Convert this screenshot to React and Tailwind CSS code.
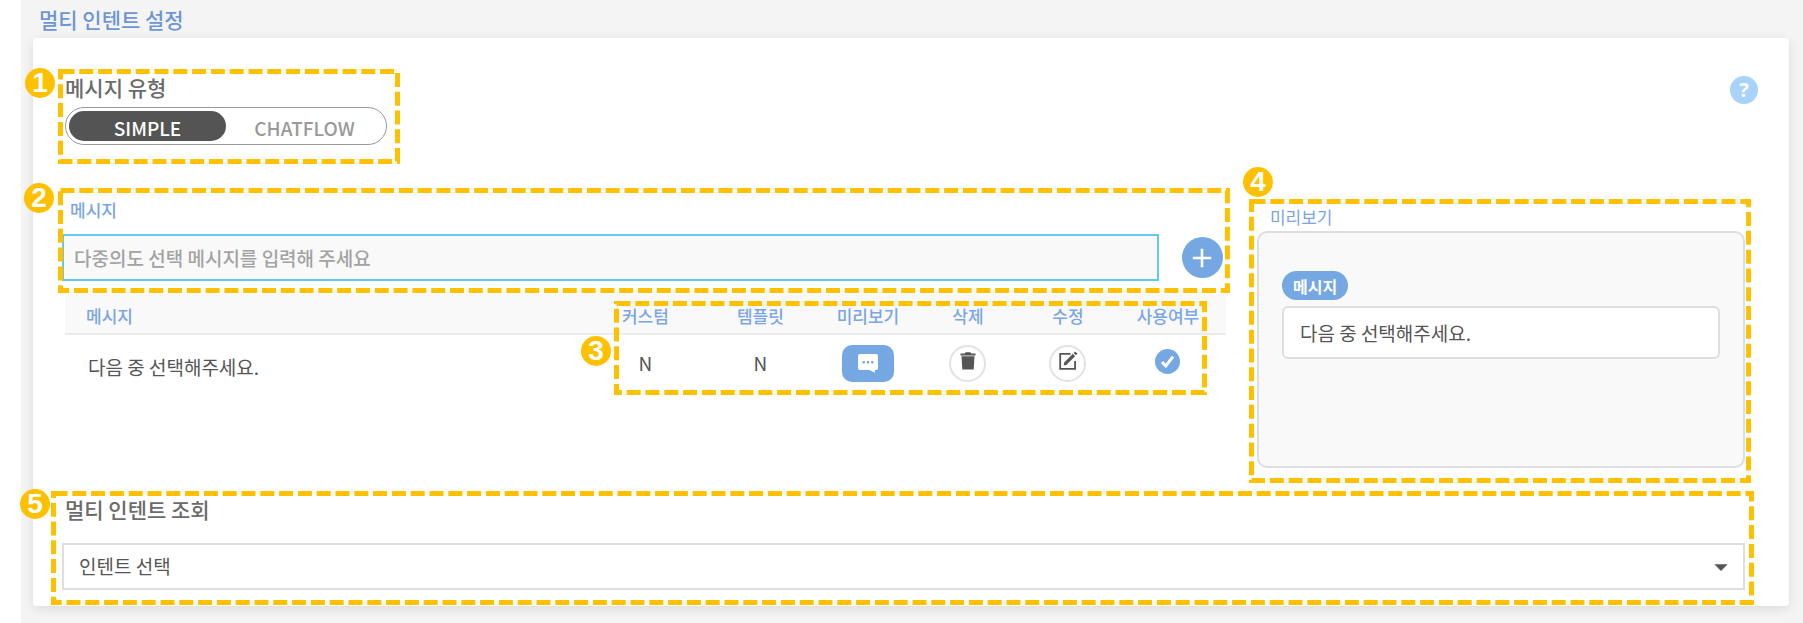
import React from "react";
import { MdArrowDropDown } from "react-icons/md";

const BADGE =
  "absolute flex h-[30px] w-[30px] items-center justify-center rounded-full bg-[#ffc000] font-['Liberation_Sans',sans-serif] text-[28px] leading-none font-bold text-white";

function Callout({ number, box, badge }) {
  return (
    <div className={`pointer-events-none absolute z-10 ${box}`}>
      <svg className="block h-full w-full" aria-hidden="true">
        <rect
          x="2.5"
          y="2.5"
          className="h-[calc(100%-5px)] w-[calc(100%-5px)]"
          fill="none"
          stroke="#ffc000"
          strokeWidth="5"
          strokeDasharray="14 4.8"
        />
      </svg>
      <span className={`${BADGE} ${badge}`}>{number}</span>
    </div>
  );
}

function TypeOption({ value, defaultChecked }) {
  return (
    <label className="flex flex-1 cursor-pointer items-center justify-center rounded-full pt-[2px] text-[19px] leading-none font-medium text-[#999] has-checked:bg-[#545454] has-checked:text-white">
      <input
        type="radio"
        name="messageType"
        value={value}
        defaultChecked={defaultChecked}
        className="sr-only"
      />
      {value}
    </label>
  );
}

function TypeSection() {
  return (
    <div className="flex items-start justify-between">
      <div className="relative ml-[3px] w-[322px]">
        <fieldset>
          <legend className="text-[21px] leading-7 font-medium text-[#6b6b6b]">메시지 유형</legend>
          <div className="mt-[6px] flex h-[38px] rounded-full border border-[#999] p-[3px]">
            <TypeOption value="SIMPLE" defaultChecked />
            <TypeOption value="CHATFLOW" />
          </div>
        </fieldset>
        <Callout
          number={1}
          box="-top-[4px] -right-[13px] -bottom-[19px] -left-[7px]"
          badge="-left-[33px] -top-px"
        />
      </div>
      <button
        type="button"
        aria-label="도움말"
        className="mt-[3px] -mr-[13px] flex h-7 w-7 items-center justify-center rounded-full bg-[#a9d2f8] font-['Open_Sans',sans-serif] text-[20px] leading-none font-bold text-white"
      >
        ?
      </button>
    </div>
  );
}

function MessageForm() {
  return (
    <div className="relative">
      <label
        htmlFor="message"
        className="mb-3 ml-2 block text-[17px] leading-6 font-medium text-[#7ba5e6]"
      >
        메시지
      </label>
      <div className="flex items-center gap-[23px] pr-[3px]">
        <input
          id="message"
          type="text"
          placeholder="다중의도 선택 메시지를 입력해 주세요"
          className="h-[47px] min-w-0 flex-1 border-2 border-[#63c8ec] bg-[#f9f9f9] px-[10px] text-[19px] text-[#555] outline-none placeholder:font-medium placeholder:text-[#a3a3a3]"
        />
        <button
          type="button"
          aria-label="메시지 추가"
          className="flex h-[41px] w-[41px] shrink-0 items-center justify-center rounded-full bg-[#75a7e2]"
        >
          <svg viewBox="0 0 20 20" className="h-5 w-5" stroke="#fff" strokeWidth="2.6">
            <path d="M10 .8v18.4M.8 10h18.4" />
          </svg>
        </button>
      </div>
      <Callout
        number={2}
        box="-top-[10px] -right-[4px] -bottom-[12px] -left-[4px]"
        badge="-left-[34px] -top-[5px]"
      />
    </div>
  );
}

function MessageTable() {
  const round =
    "mx-auto flex h-[37px] w-[37px] items-center justify-center rounded-full border-2 border-[#e2e2e2] bg-white text-[#555]";
  return (
    <div className="relative mt-[14px] ml-[3px]">
      <table className="w-full table-fixed text-center text-[19px] text-[#555]">
        <thead>
          <tr className="h-[39px] border-b-2 border-[#ebebeb] bg-[#f9f9f9] text-[17px] text-[#7ba5e6]">
            <th className="pt-1 pl-[21px] text-left font-medium">메시지</th>
            <th className="w-[115px] pt-1 font-medium">커스텀</th>
            <th className="w-[115px] pt-1 font-medium">템플릿</th>
            <th className="w-[100px] pt-1 font-medium">미리보기</th>
            <th className="w-[100px] pt-1 font-medium">삭제</th>
            <th className="w-[100px] pt-1 font-medium">수정</th>
            <th className="w-[108px] pt-1 pr-2 font-medium">사용여부</th>
          </tr>
        </thead>
        <tbody>
          <tr className="h-[57px]">
            <td className="pt-2 pl-[23px] text-left">다음 중 선택해주세요.</td>
            <td>N</td>
            <td>N</td>
            <td>
              <button
                type="button"
                aria-label="미리보기"
                className="mx-auto flex h-[37px] w-[52px] items-center justify-center rounded-[10px] bg-[#75a7e2]"
              >
                <svg viewBox="0 0 20 19" className="h-[19px] w-5">
                  <path
                    d="M2 0h16a2 2 0 0 1 2 2v12a2 2 0 0 1-2 2h-1.2v2.8L11.5 16H2a2 2 0 0 1-2-2V2a2 2 0 0 1 2-2z"
                    fill="#fff"
                  />
                  <path d="M4.6 7h2.2v2.4H4.6zM8.9 7h2.2v2.4H8.9zM13.2 7h2.2v2.4h-2.2z" fill="#75a7e2" />
                </svg>
              </button>
            </td>
            <td>
              <button type="button" aria-label="삭제" className={round}>
                <svg viewBox="0 0 16 18" className="mb-1 h-[18px] w-4" fill="currentColor">
                  <path d="M.5 1.4h4.2L5.6.2h4.8l.9 1.2h4.2v2H.5zM1.5 4.2h13L13.7 17.6H2.3z" />
                </svg>
              </button>
            </td>
            <td>
              <button type="button" aria-label="수정" className={round}>
                <svg viewBox="0 0 20 20" className="mb-1 h-5 w-5" fill="none" stroke="currentColor">
                  <path d="M12.5 2.9H2.2v14.9h14.9V10" strokeWidth="1.8" />
                  <path d="M7.6 12.4 16 4" strokeWidth="3.2" />
                  <path d="m16.8 3.2 1.6-1.6" strokeWidth="3.2" />
                  <path d="M5.6 14.4l.8-3.6 2.9 2.9z" fill="currentColor" stroke="none" />
                </svg>
              </button>
            </td>
            <td className="pr-2 pb-1">
              <label className="mx-auto block h-[25px] w-[25px] cursor-pointer">
                <input type="checkbox" defaultChecked aria-label="사용여부" className="sr-only" />
                <svg viewBox="0 0 25 25" className="h-full w-full">
                  <circle cx="12.5" cy="12.5" r="12.5" fill="#75a7e2" />
                  <path d="m7 13 3.8 4 7.2-9.4" fill="none" stroke="#fff" strokeWidth="3" />
                </svg>
              </label>
            </td>
          </tr>
        </tbody>
      </table>
      <Callout
        number={3}
        box="top-[6px] right-[19px] h-[94px] w-[593px]"
        badge="-left-[33px] top-[35px]"
      />
    </div>
  );
}

function Preview() {
  return (
    <section className="relative pt-[7px]">
      <h3 className="ml-[13px] text-[17px] leading-6 text-[#7ba5e6]">미리보기</h3>
      <div className="mt-[2px] min-h-[237px] rounded-[10px] border-2 border-[#dedede] bg-[#f9f9f9] px-[23px] pt-[38px]">
        <span className="flex h-[29px] w-fit items-center rounded-full bg-[#75a7e2] px-[11px] text-[16px] leading-none font-bold text-white">
          메시지
        </span>
        <p className="mt-[6px] flex h-[53px] items-center rounded-md border-2 border-[#dedede] bg-white px-4 pt-px text-[19px] text-[#555]">
          다음 중 선택해주세요.
        </p>
      </div>
      <Callout
        number={4}
        box="top-px -right-[6px] -bottom-[15px] -left-[8px]"
        badge="-left-[6px] -top-[32px]"
      />
    </section>
  );
}

function IntentLookup() {
  return (
    <section className="relative mt-[27px]">
      <label htmlFor="intent" className="ml-[3px] block text-[21px] leading-7 font-medium text-[#6b6b6b]">
        멀티 인텐트 조회
      </label>
      <div className="mt-5 grid">
        <select
          id="intent"
          className="col-start-1 row-start-1 h-[47px] w-full appearance-none border-2 border-[#dedede] bg-white px-[15px] text-[19px] text-[#555] outline-none"
        >
          <option>인텐트 선택</option>
        </select>
        <MdArrowDropDown className="pointer-events-none col-start-1 row-start-1 mr-2 h-8 w-8 self-center justify-self-end text-[#555]" />
      </div>
      <Callout
        number={5}
        box="-top-[4px] -right-[9px] -bottom-[15px] -left-[11px]"
        badge="-left-[31px] -top-[2px]"
      />
    </section>
  );
}

export default function App() {
  return (
    <div className="bg-white pl-[21px] font-['Noto_Sans_CJK_KR',sans-serif]">
      <main className="min-h-screen bg-[#f4f4f4] pr-[14px] pb-4 pl-3">
        <h1 className="h-[38px] pl-[6px] text-[21px] leading-[38px] font-medium text-[#6c96d4]">
          멀티 인텐트 설정
        </h1>
        <div className="rounded bg-white pt-[35px] pr-[44px] pb-4 pl-[29px] shadow-[0_3px_12px_rgba(0,0,0,0.1)]">
          <TypeSection />
          <div className="mt-[53px] grid grid-cols-[minmax(0,1fr)_29%] gap-[31px]">
            <section>
              <MessageForm />
              <MessageTable />
            </section>
            <Preview />
          </div>
          <IntentLookup />
        </div>
      </main>
    </div>
  );
}
